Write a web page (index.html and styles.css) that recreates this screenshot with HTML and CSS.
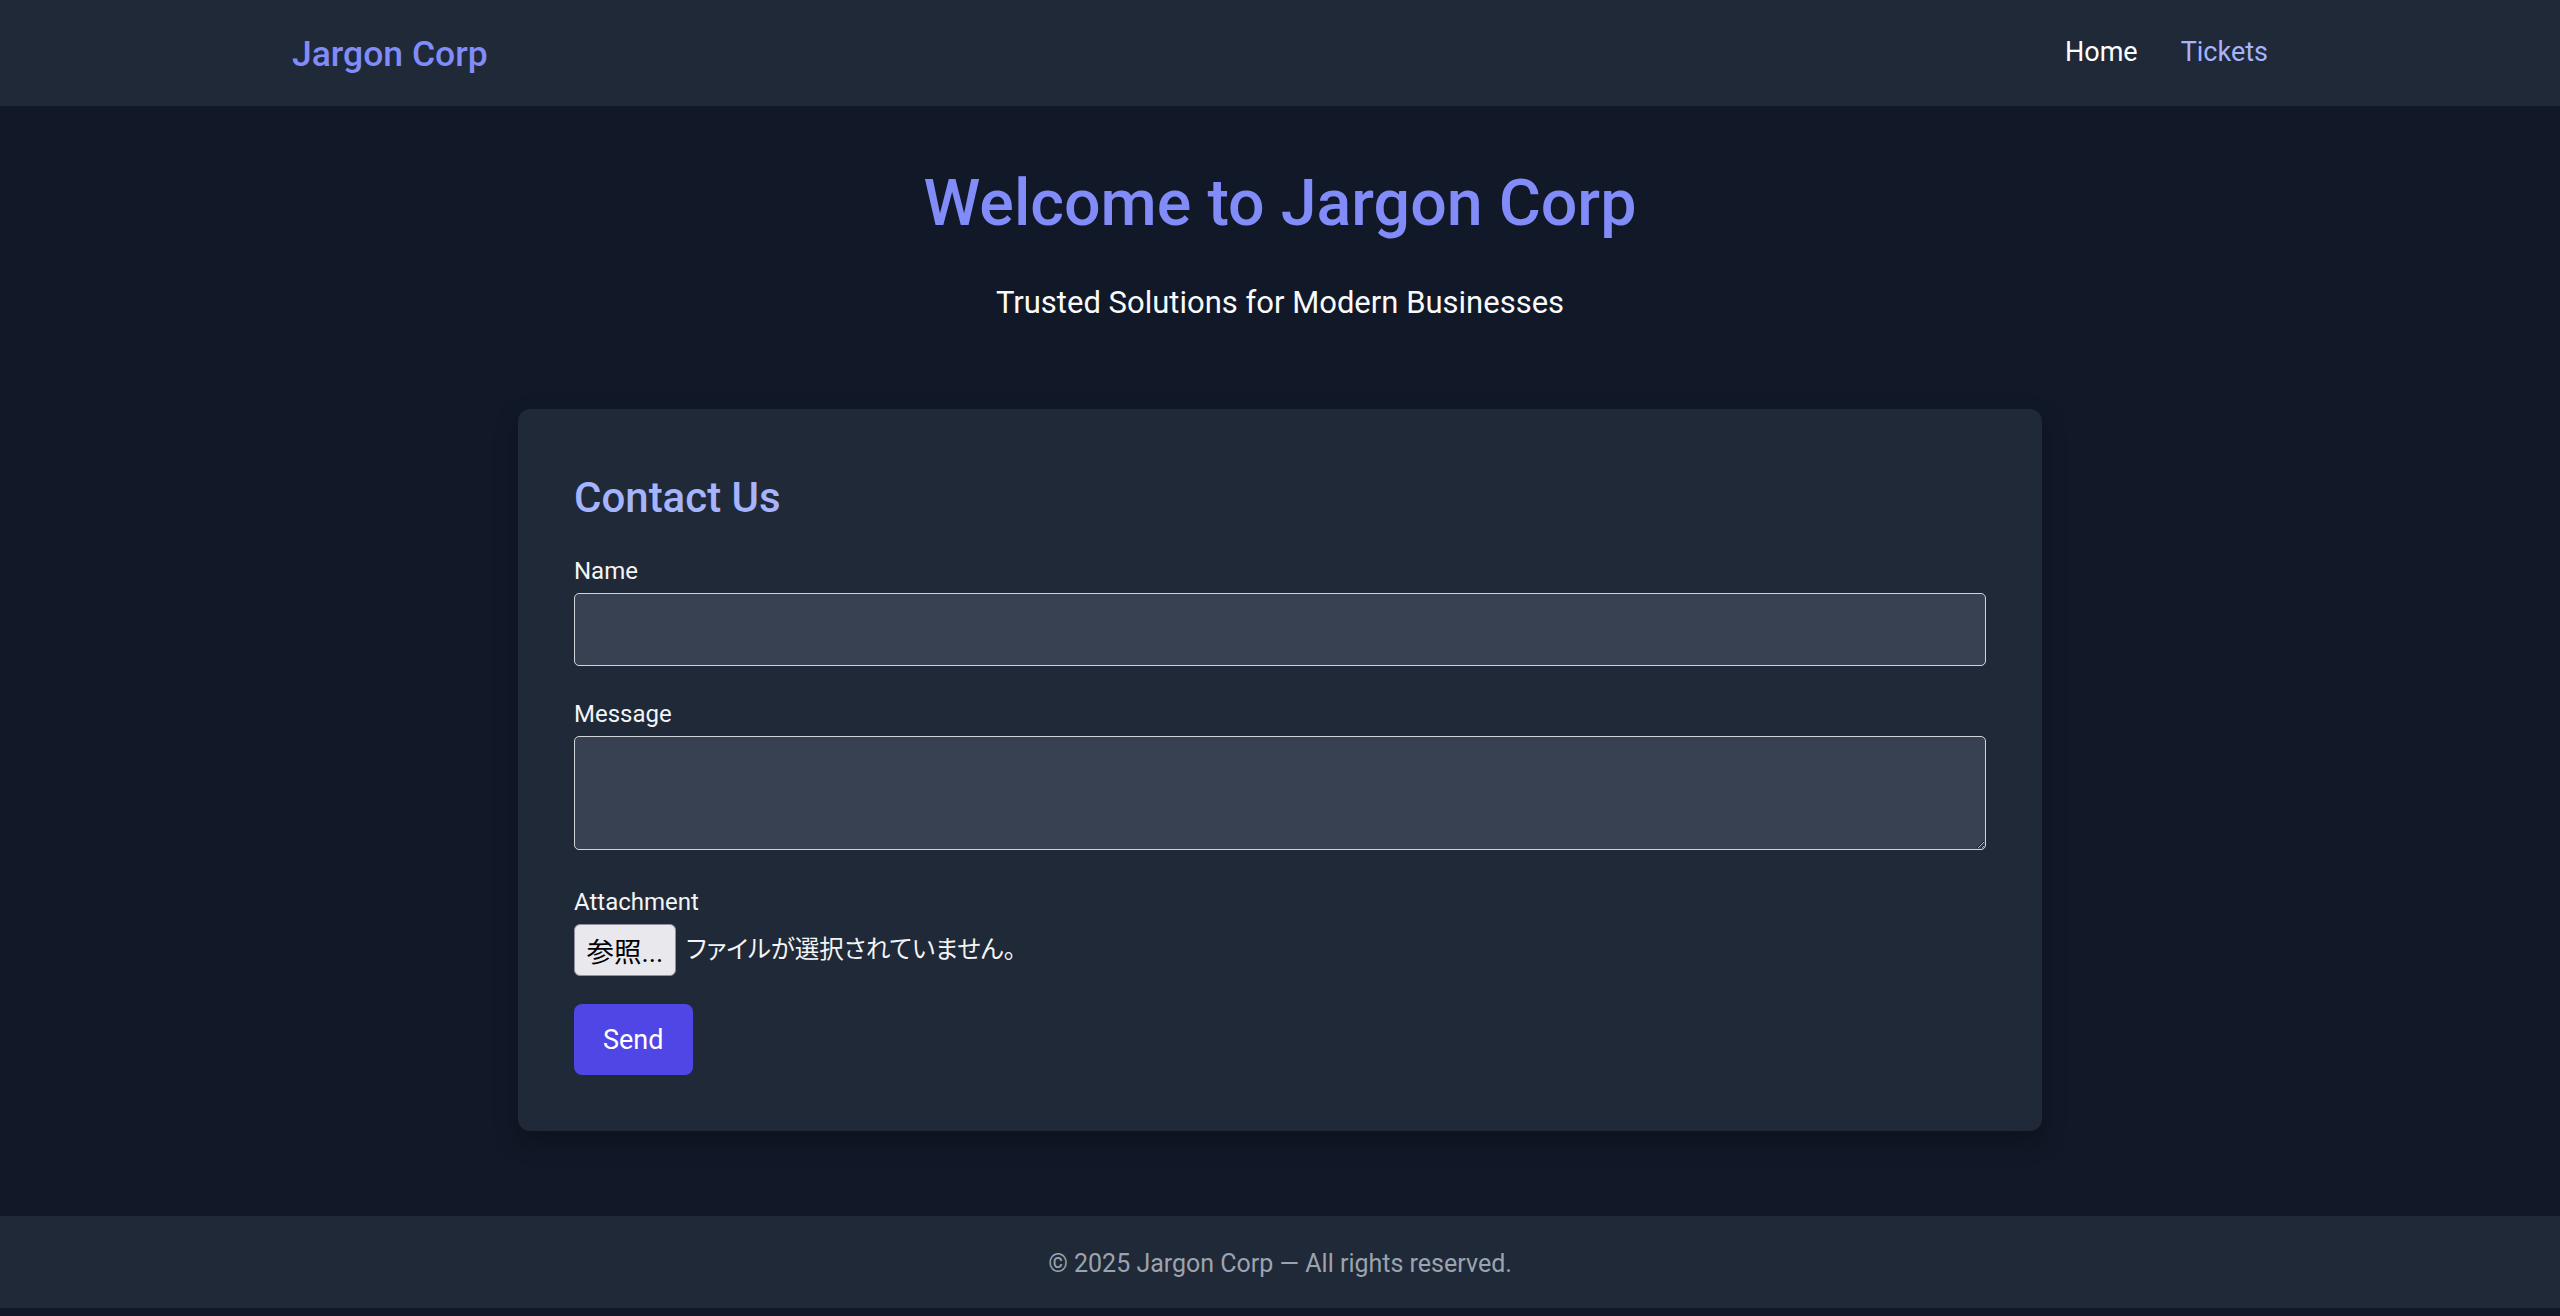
FILE: index.html
```html
<!DOCTYPE html>
<html lang="en">
<head>
<meta charset="utf-8">
<title>Jargon Corp</title>
<link rel="stylesheet" href="styles.css">
</head>
<body>
<header class="site-header">
  <div class="container header-inner">
    <a class="logo" href="#">Jargon Corp</a>
    <nav class="nav">
      <a class="nav-link" href="#">Home</a>
      <a class="nav-link nav-link-accent" href="#">Tickets</a>
    </nav>
  </div>
</header>
<main class="main">
  <section class="hero">
    <h1 class="hero-title">Welcome to Jargon Corp</h1>
    <p class="hero-subtitle">Trusted Solutions for Modern Businesses</p>
  </section>
  <section class="card">
    <h2 class="card-title">Contact Us</h2>
    <form class="form">
      <div class="field">
        <label class="field-label" for="name">Name</label>
        <input class="field-input" id="name" type="text">
      </div>
      <div class="field field-message">
        <label class="field-label" for="message">Message</label>
        <textarea class="field-textarea" id="message"></textarea>
      </div>
      <div class="field field-file">
        <span class="field-label">Attachment</span>
        <div class="file-row">
          <span class="file-button">参照...</span>
          <span class="file-status">ファイルが選択されていません。</span>
        </div>
      </div>
      <button class="btn-send" type="button">Send</button>
    </form>
  </section>
</main>
<footer class="site-footer">
  <p class="footer-text">© 2025 Jargon Corp — All rights reserved.</p>
</footer>
</body>
</html>
```
FILE: styles.css
```css
* { box-sizing: border-box; }

html, body {
  margin: 0;
  padding: 0;
  background: #111827;
}

body {
  font-family: "Roboto", "Noto Sans CJK JP", sans-serif;
  color: #f3f4f6;
}

/* Header */
.site-header {
  background: #1f2937;
  height: 106px;
}

.container {
  max-width: 2048px;
  margin: 0 auto;
  padding: 0 36px;
}

.header-inner {
  height: 106px;
  display: flex;
  align-items: center;
  justify-content: space-between;
}

.logo {
  color: #818cf8;
  font-size: 35.5px;
  font-weight: 500;
  line-height: 48px;
  text-decoration: none;
  padding-top: 2px;
}

.nav {
  display: flex;
  gap: 43px;
  padding-bottom: 3px;
}

.nav-link {
  color: #ffffff;
  font-size: 27px;
  line-height: 40px;
  text-decoration: none;
}

.nav-link-accent {
  color: #a5b4fc;
}

/* Main */
.main {
  padding: 57px 0 85px;
}

.hero {
  text-align: center;
}

.hero-title {
  margin: 0;
  color: #818cf8;
  font-size: 64.5px;
  font-weight: 500;
  line-height: 80px;
}

.hero-subtitle {
  margin: 38px 0 0;
  color: #f9fafb;
  font-size: 31px;
  line-height: 44px;
}

/* Card */
.card {
  width: 1524px;
  margin: 84px auto 0;
  padding: 56px;
  background: #1f2937;
  border-radius: 12px;
  box-shadow: 0 10px 25px rgba(0, 0, 0, 0.25);
}

.card-title {
  margin: 0 0 22px;
  color: #a5b4fc;
  font-size: 42px;
  font-weight: 500;
  line-height: 66px;
}

.field {
  margin-bottom: 30px;
}

.field-message {
  margin-bottom: 34px;
}

.field-file {
  margin-bottom: 28px;
}

.field-label {
  display: block;
  margin-bottom: 4px;
  color: #f3f4f6;
  font-size: 24px;
  line-height: 36px;
}

.field-input,
.field-textarea {
  display: block;
  width: 100%;
  background: #374151;
  border: 1px solid #d1d5db;
  border-radius: 5px;
  color: #f3f4f6;
  font-family: inherit;
  font-size: 24px;
  padding: 12px 16px;
  margin: 0;
}

.field-input {
  height: 73px;
}

.field-textarea {
  height: 114px;
  resize: vertical;
  color-scheme: dark;
}

.file-row {
  display: flex;
  align-items: center;
  gap: 10px;
  height: 52px;
}

.file-button {
  display: flex;
  align-items: center;
  justify-content: center;
  width: 102px;
  height: 52px;
  background: #e9e9ed;
  border: 1px solid #8f8f9d;
  border-radius: 6px;
  color: #000000;
  font-size: 27.5px;
  font-family: "Roboto", "Noto Sans CJK JP", sans-serif;
}

.file-status {
  padding-bottom: 5px;
  color: #f3f4f6;
  font-family: "Noto Sans CJK JP", sans-serif;
  font-size: 24.5px;
  font-feature-settings: "palt";
}

.btn-send {
  display: block;
  height: 71px;
  padding: 0 29px;
  background: #4f46e5;
  border: none;
  border-radius: 8px;
  color: #ffffff;
  font-family: inherit;
  font-size: 27px;
  cursor: pointer;
}

/* Footer */
.site-footer {
  background: #1f2937;
  height: 92px;
  display: flex;
  align-items: center;
  justify-content: center;
}

.footer-text {
  margin: 0;
  padding-top: 3px;
  color: #9ca3af;
  font-size: 25px;
  line-height: 36px;
}
```
